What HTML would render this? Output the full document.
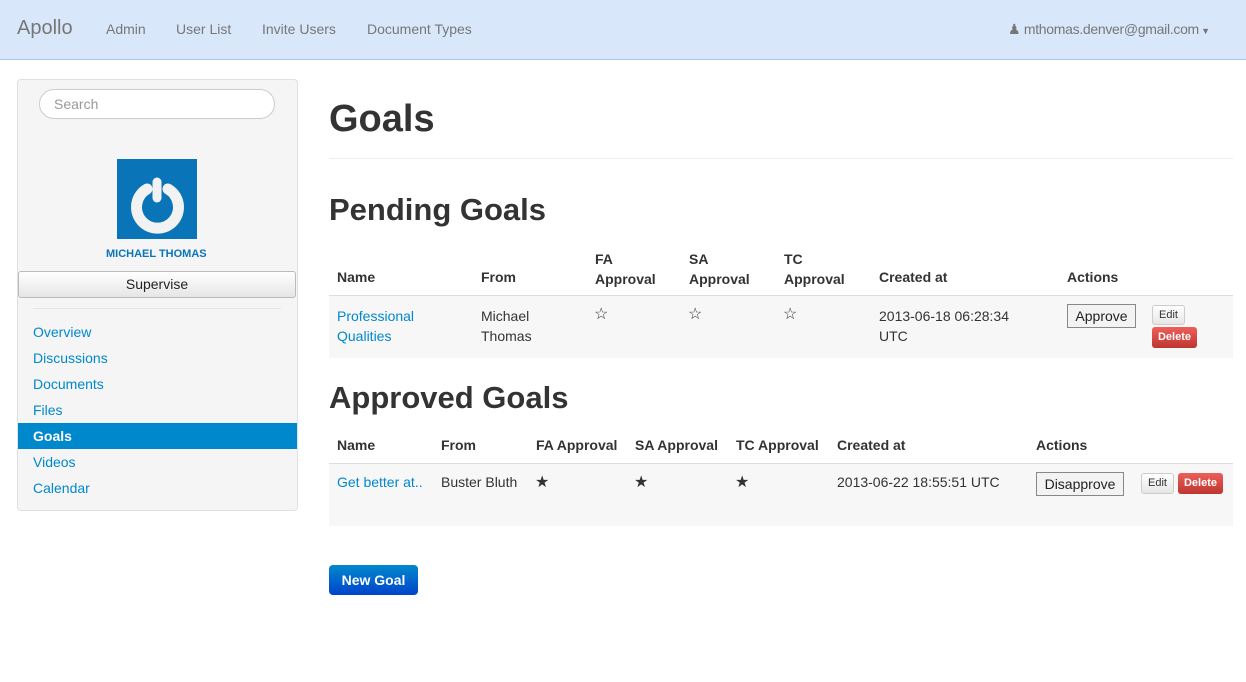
<!DOCTYPE html>
<html><head><style>
body{margin:0;width:1246px;height:682px;background:#fff;font-family:"Liberation Sans",Arial,sans-serif;font-size:14px;color:#333;position:relative;overflow:hidden}
.a{position:absolute;white-space:nowrap}
.nav{position:absolute;left:0;top:0;width:1246px;height:59px;background:#d9e7fb;border-bottom:1px solid #a9c6ee}
.nl{color:#777;font-size:14px;top:21px}
.lk{color:#0088cc}
.th{font-weight:bold;font-size:14px;color:#333}
.st{font-size:16px;color:#333}
.btn{position:absolute;border:1px solid #888;background:#f3f3f3;font-size:14px;text-align:center;box-sizing:border-box;color:#222}
.sb{position:absolute;border:1px solid #ccc;border-radius:3px;background:linear-gradient(#fff,#e6e6e6);font-size:11px;text-align:center;box-sizing:border-box}
.del{position:absolute;border-radius:3px;background:linear-gradient(#ee5f5b,#bd362f);color:#fff;font-size:11px;font-weight:bold;text-align:center;box-sizing:border-box}
</style></head><body>
<div class="nav"></div>
<div class="a" style="left:17px;top:17px;font-size:20px;color:#777">Apollo</div>
<div class="a nl" style="left:106px">Admin</div>
<div class="a nl" style="left:176px">User List</div>
<div class="a nl" style="left:262px">Invite Users</div>
<div class="a nl" style="left:367px">Document Types</div>
<div class="a nl" style="left:1008px;letter-spacing:-0.3px">&#9823; mthomas.denver@gmail.com<span style="font-size:9px"> &#9660;</span></div>

<div class="a" style="left:17px;top:79px;width:279px;height:430px;background:#f5f5f5;border:1px solid #e0e0e0;border-radius:4px"></div>
<div class="a" style="left:39px;top:89px;width:234px;height:28px;border:1px solid #ccc;border-radius:15px;background:#fff"></div>
<div class="a" style="left:54px;top:96px;color:#999">Search</div>
<div class="a" style="left:117px;top:159px;width:80px;height:80px;background:#0a74b8"></div>
<svg class="a" style="left:117px;top:159px" width="80" height="80"><path d="M30 30 A21 21 0 1 0 51 30" fill="none" stroke="#f2f2f2" stroke-width="11" stroke-linecap="round"/><line x1="40" y1="23" x2="40" y2="39" stroke="#f2f2f2" stroke-width="9" stroke-linecap="round"/></svg>
<div class="a" style="left:106px;top:248px;font-size:11px;font-weight:bold;color:#0a74b8">MICHAEL THOMAS</div>
<div class="a" style="left:18px;top:271px;width:278px;height:27px;border:1px solid #bbb;border-radius:3px;background:linear-gradient(#fff,#e6e6e6);box-sizing:border-box;text-align:center;line-height:25px;color:#222">Supervise</div>
<div class="a" style="left:33px;top:308px;width:248px;height:1px;background:#e5e5e5"></div>
<div class="a lk" style="left:33px;top:324px">Overview</div>
<div class="a lk" style="left:33px;top:350px">Discussions</div>
<div class="a lk" style="left:33px;top:376px">Documents</div>
<div class="a lk" style="left:33px;top:402px">Files</div>
<div class="a" style="left:18px;top:423px;width:279px;height:26px;background:#0088cc"></div>
<div class="a" style="left:33px;top:428px;color:#fff;font-weight:bold">Goals</div>
<div class="a lk" style="left:33px;top:454px">Videos</div>
<div class="a lk" style="left:33px;top:480px">Calendar</div>

<div class="a" style="left:329px;top:98px;font-size:38px;font-weight:bold">Goals</div>
<div class="a" style="left:329px;top:158px;width:904px;height:1px;background:#eee"></div>
<div class="a" style="left:329px;top:192px;font-size:31px;font-weight:bold">Pending Goals</div>
<div class="a th" style="left:337px;top:269px">Name</div>
<div class="a th" style="left:481px;top:269px">From</div>
<div class="a th" style="left:595px;top:249px;line-height:20px">FA<br>Approval</div>
<div class="a th" style="left:689px;top:249px;line-height:20px">SA<br>Approval</div>
<div class="a th" style="left:784px;top:249px;line-height:20px">TC<br>Approval</div>
<div class="a th" style="left:879px;top:269px">Created at</div>
<div class="a th" style="left:1067px;top:269px">Actions</div>
<div class="a" style="left:329px;top:295px;width:904px;height:62px;background:#f7f7f7;border-top:1px solid #ddd"></div>
<div class="a lk" style="left:337px;top:306px;line-height:20px">Professional<br>Qualities</div>
<div class="a" style="left:481px;top:306px;line-height:20px">Michael<br>Thomas</div>
<div class="a st" style="left:594px;top:304px">&#9734;</div>
<div class="a st" style="left:688px;top:304px">&#9734;</div>
<div class="a st" style="left:783px;top:304px">&#9734;</div>
<div class="a" style="left:879px;top:306px;line-height:20px">2013-06-18 06:28:34<br>UTC</div>
<div class="btn" style="left:1067px;top:304px;width:69px;height:24px;line-height:22px">Approve</div>
<div class="sb" style="left:1152px;top:305px;width:33px;height:20px;line-height:18px">Edit</div>
<div class="del" style="left:1152px;top:327px;width:45px;height:21px;line-height:21px">Delete</div>

<div class="a" style="left:329px;top:380px;font-size:31px;font-weight:bold">Approved Goals</div>
<div class="a th" style="left:337px;top:437px">Name</div>
<div class="a th" style="left:441px;top:437px">From</div>
<div class="a th" style="left:536px;top:437px">FA Approval</div>
<div class="a th" style="left:635px;top:437px">SA Approval</div>
<div class="a th" style="left:736px;top:437px">TC Approval</div>
<div class="a th" style="left:837px;top:437px">Created at</div>
<div class="a th" style="left:1036px;top:437px">Actions</div>
<div class="a" style="left:329px;top:463px;width:904px;height:62px;background:#f7f7f7;border-top:1px solid #ddd"></div>
<div class="a lk" style="left:337px;top:474px">Get better at..</div>
<div class="a" style="left:441px;top:474px">Buster Bluth</div>
<div class="a st" style="left:535px;top:472px">&#9733;</div>
<div class="a st" style="left:634px;top:472px">&#9733;</div>
<div class="a st" style="left:735px;top:472px">&#9733;</div>
<div class="a" style="left:837px;top:474px">2013-06-22 18:55:51 UTC</div>
<div class="btn" style="left:1036px;top:472px;width:88px;height:24px;line-height:22px">Disapprove</div>
<div class="sb" style="left:1141px;top:473px;width:33px;height:21px;line-height:19px">Edit</div>
<div class="del" style="left:1178px;top:473px;width:45px;height:21px;line-height:21px">Delete</div>

<div class="a" style="left:329px;top:565px;width:89px;height:30px;border-radius:4px;background:linear-gradient(#0088cc,#0044cc);color:#fff;font-weight:bold;text-align:center;line-height:30px">New Goal</div>
</body></html>
